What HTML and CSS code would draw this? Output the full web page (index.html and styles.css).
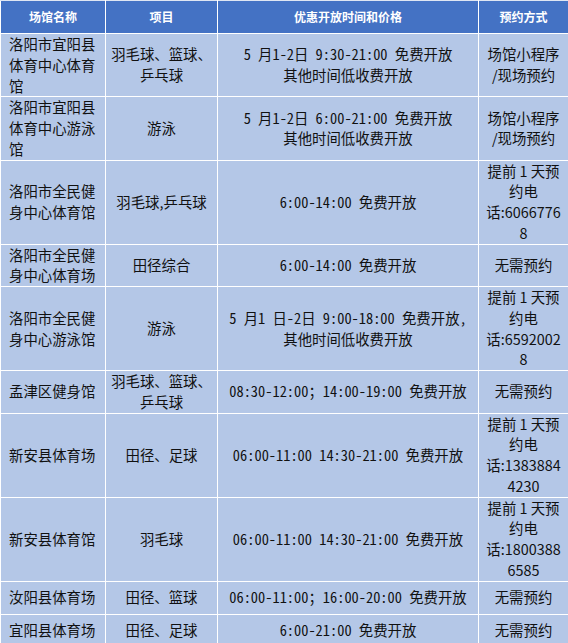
FILE: index.html
```html
<!DOCTYPE html>
<html lang="zh-CN">
<head>
<meta charset="utf-8">
<title>场馆开放</title>
<link rel="stylesheet" href="styles.css">
</head>
<body>
<table class="venues">
  <colgroup>
    <col class="c-name">
    <col class="c-item">
    <col class="c-time">
    <col class="c-book">
  </colgroup>
  <thead>
    <tr>
      <th>场馆名称</th>
      <th>项目</th>
      <th>优惠开放时间和价格</th>
      <th>预约方式</th>
    </tr>
  </thead>
  <tbody>
    <tr>
      <td class="name">洛阳市宜阳县<br>体育中心体育<br>馆</td>
      <td>羽毛球、篮球、<br>乒乓球</td>
      <td class="time">5 月1-2日 9:30-21:00 免费开放<br>其他时间低收费开放</td>
      <td class="book">场馆小程序<br>/现场预约</td>
    </tr>
    <tr>
      <td class="name">洛阳市宜阳县<br>体育中心游泳<br>馆</td>
      <td>游泳</td>
      <td class="time">5 月1-2日 6:00-21:00 免费开放<br>其他时间低收费开放</td>
      <td class="book">场馆小程序<br>/现场预约</td>
    </tr>
    <tr>
      <td class="name">洛阳市全民健<br>身中心体育馆</td>
      <td>羽毛球,乒乓球</td>
      <td class="time">6:00-14:00 免费开放</td>
      <td class="book">提前 1 天预<br>约电<br>话:6066776<br>8</td>
    </tr>
    <tr>
      <td class="name">洛阳市全民健<br>身中心体育场</td>
      <td>田径综合</td>
      <td class="time">6:00-14:00 免费开放</td>
      <td class="book">无需预约</td>
    </tr>
    <tr>
      <td class="name">洛阳市全民健<br>身中心游泳馆</td>
      <td>游泳</td>
      <td class="time">5 月1 日-2日 9:00-18:00 免费开放，<br>其他时间低收费开放</td>
      <td class="book">提前 1 天预<br>约电<br>话:6592002<br>8</td>
    </tr>
    <tr>
      <td class="name">孟津区健身馆</td>
      <td>羽毛球、篮球、<br>乒乓球</td>
      <td class="time">08:30-12:00；14:00-19:00 免费开放</td>
      <td class="book">无需预约</td>
    </tr>
    <tr>
      <td class="name">新安县体育场</td>
      <td>田径、足球</td>
      <td class="time">06:00-11:00 14:30-21:00 免费开放</td>
      <td class="book">提前 1 天预<br>约电<br>话:1383884<br>4230</td>
    </tr>
    <tr>
      <td class="name">新安县体育馆</td>
      <td>羽毛球</td>
      <td class="time">06:00-11:00 14:30-21:00 免费开放</td>
      <td class="book">提前 1 天预<br>约电<br>话:1800388<br>6585</td>
    </tr>
    <tr>
      <td class="name">汝阳县体育场</td>
      <td>田径、篮球</td>
      <td class="time">06:00-11:00；16:00-20:00 免费开放</td>
      <td class="book">无需预约</td>
    </tr>
    <tr>
      <td class="name">宜阳县体育场</td>
      <td>田径、足球</td>
      <td class="time">6:00-21:00 免费开放</td>
      <td class="book">无需预约</td>
    </tr>
  </tbody>
</table>
</body>
</html>
```
FILE: styles.css
```css
html, body {
  margin: 0;
  padding: 0;
  background: #ffffff;
}

.venues {
  width: 568px;
  table-layout: fixed;
  border-collapse: collapse;
  font-family: "Noto Sans CJK SC", "Noto Sans", sans-serif;
}

.c-name { width: 105px; }
.c-item { width: 112px; }
.c-time { width: 261px; }
.c-book { width: 90px; }

.venues th,
.venues td {
  border: 1px solid #ffffff;
  text-align: center;
  vertical-align: middle;
  white-space: nowrap;
  overflow: hidden;
  padding: 0 4px;
}

.venues th {
  height: 32px;
  background: #4472c4;
  color: #ffffff;
  font-size: 12px;
  font-weight: 700;
  line-height: 16px;
}

.venues thead tr th {
  border-top: 1px solid #dfe6f3;
}

.venues td {
  height: 32px;
  background: #b4c7e7;
  color: #111111;
  font-size: 14.4px;
  line-height: 20.75px;
}

.venues td.time {
  font-feature-settings: "hwid" 1;
}

.venues td.name {
  text-align: left;
  padding-left: 8px;
}

.venues td.book {
  padding: 0 2px;
}
```
